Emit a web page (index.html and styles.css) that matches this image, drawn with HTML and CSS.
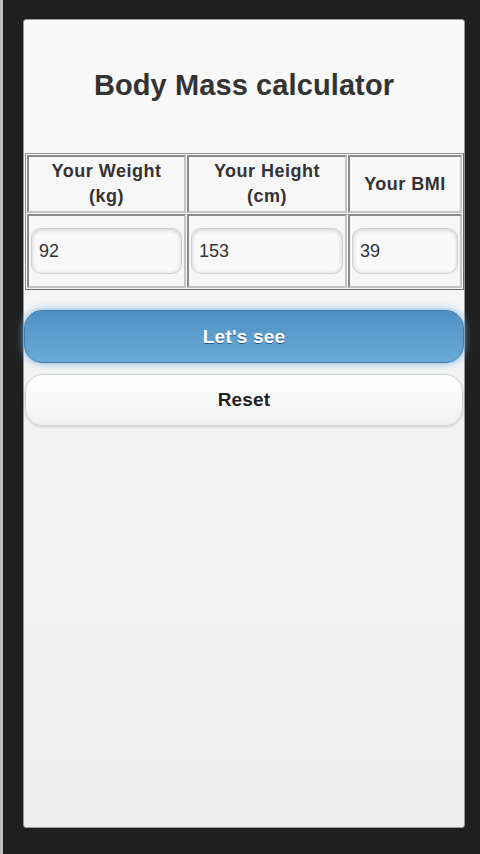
FILE: index.html
```html
<!DOCTYPE html>
<html>
<head>
<meta charset="utf-8">
<link rel="stylesheet" href="styles.css">
</head>
<body>
<div class="screen">
  <div class="page">
    <h1 class="title">Body Mass calculator</h1>
    <table class="calc">
      <tr>
        <th class="c1">Your Weight<br>(kg)</th>
        <th class="c2">Your Height<br>(cm)</th>
        <th class="c3">Your BMI</th>
      </tr>
      <tr>
        <td><div class="field">92</div></td>
        <td><div class="field">153</div></td>
        <td><div class="field">39</div></td>
      </tr>
    </table>
    <div class="actions">
      <button class="btn btn-primary">Let's see</button>
      <button class="btn btn-plain">Reset</button>
    </div>
  </div>
</div>
</body>
</html>
```

FILE: styles.css
```css
html, body {
  margin: 0;
  padding: 0;
  background: #1f1f1f;
  height: 854px;
  overflow: hidden;
}

.screen {
  border-left: 3px solid #bdbdbd;
  padding: 19px 0 0 20px;
  height: 854px;
  box-sizing: border-box;
  font-family: "Liberation Sans", Arial, sans-serif;
}

.page {
  width: 442px;
  height: 809px;
  box-sizing: border-box;
  border: 1px solid #9a9a9a;
  border-radius: 3px;
  background: linear-gradient(#f9f9f9, #eeeeee);
  display: flex;
  flex-direction: column;
}

.title {
  margin: 0;
  height: 133px;
  display: flex;
  align-items: center;
  justify-content: center;
  padding-bottom: 3px;
  box-sizing: border-box;
  font-size: 29px;
  font-weight: bold;
  color: #333;
  letter-spacing: 0.1px;
}

.calc {
  margin-left: 1px;
  width: 439px;
  border-collapse: separate;
  border-spacing: 1px;
  border: 1px solid;
  border-color: #8f8f8f #6a6a6a #6a6a6a #8f8f8f;
  table-layout: fixed;
}

.calc th,
.calc td {
  border: 2px solid;
  border-color: #8a8a8a #c4c4c4 #c4c4c4 #8a8a8a;
  padding: 0;
  vertical-align: middle;
}

.calc th {
  height: 54px;
  font-size: 18px;
  letter-spacing: 0.5px;
  line-height: 25px;
  font-weight: bold;
  color: #333;
  text-align: center;
}

.calc th.c1 { width: 155px; }
.calc th.c2 { width: 156px; }

.calc td {
  height: 70px;
  padding: 0 2px;
}

.field {
  height: 46px;
  box-sizing: border-box;
  border: 1px solid #cfcfcf;
  border-radius: 10px;
  background: #f9f9f9;
  box-shadow: inset 0 1px 4px rgba(0, 0, 0, 0.18);
  font-size: 18px;
  color: #333;
  padding-left: 7px;
  display: flex;
  align-items: center;
}

.actions {
  display: flex;
  flex-direction: column;
  padding-top: 20px;
  gap: 11px;
}

.btn {
  font-family: "Liberation Sans", Arial, sans-serif;
  font-size: 19px;
  font-weight: bold;
  letter-spacing: 0.2px;
  border-radius: 18px;
  cursor: pointer;
}

.btn-primary {
  height: 53px;
  margin: 0;
  width: 440px;
  color: #fff;
  border: 1px solid #3f7cae;
  background: linear-gradient(#5190c4, #6aaad6);
  text-shadow: 0 1px 0 #2a5f8c;
  box-shadow: 0 0 8px #7bb0dc;
}

.btn-primary:focus {
  outline: none;
}

.btn-plain {
  height: 52px;
  margin: 0 0 0 1px;
  width: 438px;
  color: #222;
  border: 1px solid #d0d0d0;
  background: linear-gradient(#ffffff, #f1f1f1);
  text-shadow: 0 1px 0 #fff;
  box-shadow: 0 1px 3px rgba(0, 0, 0, 0.18);
}
```
